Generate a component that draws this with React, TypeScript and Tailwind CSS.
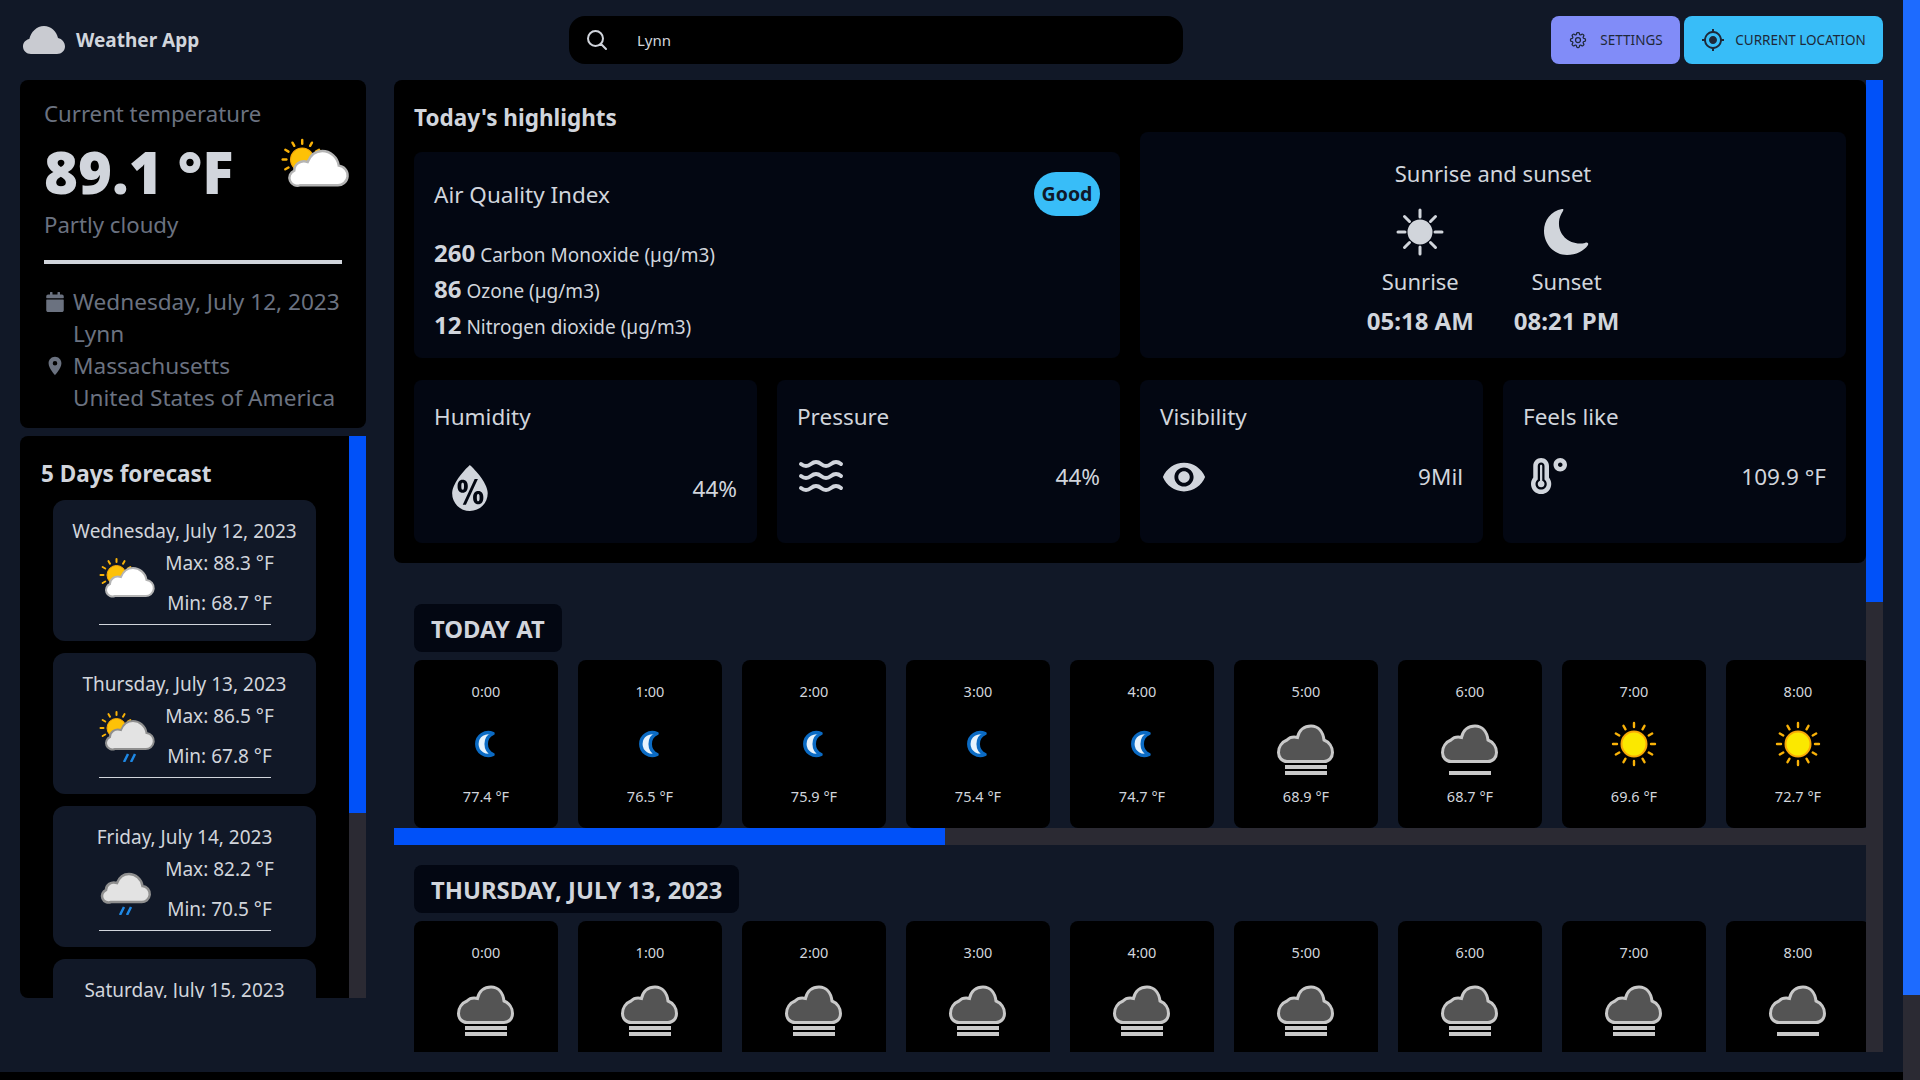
import React from "react";
import { FaCalendar, FaTemperatureHigh } from "react-icons/fa";
import { HiOutlineCog8Tooth, HiOutlineMagnifyingGlass } from "react-icons/hi2";
import { MdGpsFixed, MdLocationOn, MdVisibility } from "react-icons/md";
import { WiHumidity } from "react-icons/wi";
import { LuWaves } from "react-icons/lu";

const SunRays = ({ cx, cy, r1, r2, w }: { cx: number; cy: number; r1: number; r2: number; w: number }) => (
  <g stroke="#f9b208" strokeWidth={w} strokeLinecap="round">
    {[0, 30, 60, 90, 120, 150, 180, 210, 240, 270, 300, 330].map((a) => (
      <line
        key={a}
        x1={cx + r1 * Math.cos((a * Math.PI) / 180)}
        y1={cy + r1 * Math.sin((a * Math.PI) / 180)}
        x2={cx + r2 * Math.cos((a * Math.PI) / 180)}
        y2={cy + r2 * Math.sin((a * Math.PI) / 180)}
      />
    ))}
  </g>
);

const cloudPath = "M20 51h30a8 8 0 0 0 1.500-16C50.500 28 44.500 23 38 23 32 23 28 27 26 32 20 30 15 34 15 39A6.500 6.500 0 0 0 20 51z";

const PartlyCloudy = ({ className, rain, grey }: { className: string; rain?: boolean; grey?: boolean }) => (
  <svg viewBox="0 0 64 64" className={className}>
    <SunRays cx={21.5} cy={30} r1={13} r2={16} w={2} />
    <circle cx="21.500" cy="30" r="9.500" fill="#fdc107" stroke="#f9a806" />
    <path d={cloudPath} fill={grey ? "#e3e3e3" : "#ffffff"} stroke={grey ? "#8f8f8f" : "#b4b4b4"} strokeWidth="2" />
    {rain && <path d="M29 64l4-8M36 64l4-8" stroke="#1e88e5" strokeWidth="2.500" />}
  </svg>
);

const RainCloud = ({ className }: { className: string }) => (
  <svg viewBox="0 0 64 64" className={className}>
    <g transform="translate(-4 0)">
      <path d={cloudPath} fill="#e3e3e3" stroke="#8f8f8f" strokeWidth="2.500" />
    </g>
    <path d="M25 64l4-8M32 64l4-8" stroke="#1e88e5" strokeWidth="2.500" />
  </svg>
);

const Moon = () => (
  <svg viewBox="0 0 64 64" className="h-16 w-16">
    <path d="M39 21.500A11.500 11.500 0 1 0 39 42.500 11.500 11.500 0 0 1 39 21.500z" fill="#e6f3fd" stroke="#0b6bc4" strokeWidth="3.500" strokeLinejoin="round" />
  </svg>
);

const Sun = () => (
  <svg viewBox="0 0 64 64" className="h-16 w-16">
    <SunRays cx={32} cy={32} r1={17} r2={21} w={2.4} />
    <ellipse cx="32" cy="32" rx="12.500" ry="12.500" fill="#fbe800" stroke="#f9a806" strokeWidth="2" />
  </svg>
);

const FogCloud = ({ bars }: { bars: number }) => (
  <svg viewBox="0 0 64 64" className="h-16 w-16">
    <path
      d="M13 49.500C8 49.500 4.500 45.500 4.500 40.500 4.500 35 8 30 13 28 15.500 25.500 19 24.500 23.500 25.500 25 18 30.500 14 37 14 44.500 14 49 20 50 28 55 30 58.500 35 58.500 40.500 58.500 45.500 55 49.500 50 49.500z"
      fill="#545454"
      stroke="#c9c9c9"
      strokeWidth="3"
    />
    {bars > 1 && <rect x="11" y="53" width="42" height="4" fill="#c9c9c9" />}
    <rect x="11" y="59" width="42" height="4" fill="#c9c9c9" />
  </svg>
);

const SolidSun = () => (
  <svg viewBox="0 0 48 48" className="h-12 w-12" fill="#d1d5db" stroke="#d1d5db" strokeWidth="3" strokeLinecap="round">
    <circle cx="24" cy="24" r="11" />
    <path d="M24 2v7M24 39v7M2 24h7M39 24h7M8.500 8.500l5 5M34.500 34.500l5 5M8.500 39.500l5-5M34.500 13.500l5-5" fill="none" />
  </svg>
);

const SolidMoon = () => (
  <svg viewBox="0 0 48 48" className="h-12 w-12" fill="#d1d5db">
    <path d="M19 1C8 3 1 12 1 23 1 36 11 47 24 47 33 47 41 43 45 37 46 35 44 34 42 35 28 38 15 28 16 14 16 10 18 6 20 3 21 1 20 1 19 1z" />
  </svg>
);

type Hour = { time: string; temp?: string; icon: React.ReactNode };

const todayHours: Hour[] = [
  { time: "0:00", temp: "77.4 °F", icon: <Moon /> },
  { time: "1:00", temp: "76.5 °F", icon: <Moon /> },
  { time: "2:00", temp: "75.9 °F", icon: <Moon /> },
  { time: "3:00", temp: "75.4 °F", icon: <Moon /> },
  { time: "4:00", temp: "74.7 °F", icon: <Moon /> },
  { time: "5:00", temp: "68.9 °F", icon: <FogCloud bars={2} /> },
  { time: "6:00", temp: "68.7 °F", icon: <FogCloud bars={1} /> },
  { time: "7:00", temp: "69.6 °F", icon: <Sun /> },
  { time: "8:00", temp: "72.7 °F", icon: <Sun /> },
];

const tomorrowHours: Hour[] = ["0:00", "1:00", "2:00", "3:00", "4:00", "5:00", "6:00", "7:00", "8:00"].map((time) => ({
  time,
  icon: <FogCloud bars={time === "8:00" ? 1 : 2} />,
}));

const forecast = [
  { date: "Wednesday, July 12, 2023", max: "88.3", min: "68.7", icon: <PartlyCloudy className="h-16 w-16 shrink-0" /> },
  { date: "Thursday, July 13, 2023", max: "86.5", min: "67.8", icon: <PartlyCloudy className="h-16 w-16 shrink-0" rain grey /> },
  { date: "Friday, July 14, 2023", max: "82.2", min: "70.5", icon: <RainCloud className="h-16 w-16 shrink-0" /> },
];

const HourRow = ({ hours }: { hours: Hour[] }) => (
  <div className="flex gap-5 pl-5">
    {hours.map((h) => (
      <div key={h.time} className="flex h-[168px] w-[144px] shrink-0 flex-col items-center rounded-lg bg-black pt-[21px] text-[14.5px] text-gray-300">
        <span className="leading-5">{h.time}</span>
        <div className="mt-[11px] flex h-16 items-center justify-center">{h.icon}</div>
        <span className="mt-[10px] leading-5">{h.temp}</span>
      </div>
    ))}
  </div>
);

const Stat = ({ title, value, icon, valueClass }: { title: string; value: string; icon: React.ReactNode; valueClass: string }) => (
  <div className="h-[163px] rounded-lg bg-gray-950 px-5 pt-[21px] text-gray-300">
    <p className="text-[22.5px] leading-8">{title}</p>
    <div className="flex justify-between">
      {icon}
      <span className={`text-[22.5px] leading-8 ${valueClass}`}>{value}</span>
    </div>
  </div>
);

export default function App() {
  return (
    <div className="flex h-[1080px] overflow-hidden bg-black font-['Noto_Sans',sans-serif]">
      <div className="h-[1072px] w-[1903px] shrink-0 bg-[#111827] px-5">
        <header className="flex h-20 items-center justify-between">
          <div className="flex w-[549px] items-center gap-[11px] pl-[3px] text-gray-300">
            <svg viewBox="0 0 42 28" className="h-7 w-[42px]" fill="#c9cbd1">
              <path d="M8 28C3.500 28 0 24.700 0 20.500 0 16.800 2.700 13.700 6.300 13.100 8 6 13.500 0 21 0c7 0 12.500 5 14 12 4 .8 7 4.300 7 8.500 0 4.200-3.500 7.500-8 7.500z" />
            </svg>
            <span className="text-[19px] font-bold">Weather App</span>
          </div>
          <div className="flex h-12 w-[614px] items-center gap-7 rounded-2xl bg-black px-4 text-gray-300">
            <HiOutlineMagnifyingGlass className="h-6 w-6" strokeWidth={2} />
            <span className="text-[15px]">Lynn</span>
          </div>
          <div className="ml-auto flex gap-1 text-[13.5px] text-gray-800">
            <button className="flex h-12 w-[129px] items-center justify-center gap-3 rounded-lg bg-[#818cf8] uppercase">
              <HiOutlineCog8Tooth className="h-5 w-5" />
              Settings
            </button>
            <button className="flex h-12 w-[199px] items-center justify-center gap-[10px] rounded-lg bg-[#38bdf8] uppercase">
              <MdGpsFixed className="h-6 w-6" />
              Current location
            </button>
          </div>
        </header>

        <div className="flex gap-7">
          <aside className="w-[346px] shrink-0">
            <div className="h-[348px] rounded-lg bg-black px-6 pt-[18px] text-[#6b7280]">
              <p className="text-[22.2px] leading-8">Current temperature</p>
              <div className="mt-2 flex items-center justify-between">
                <span className="text-[58px] font-black leading-[68px] text-gray-300">89.1 °F</span>
                <PartlyCloudy className="-mr-3 -mt-5 h-[78px] w-[78px]" />
              </div>
              <p className="mt-[3px] text-[22.2px] leading-8">Partly cloudy</p>
              <div className="mt-[19px] h-1 w-[298px] bg-gray-300" />
              <div className="mt-[22px] whitespace-nowrap text-[22.6px] leading-8">
                <div className="flex items-center gap-[7px]"><FaCalendar className="h-5 w-[22px]" /> Wednesday, July 12, 2023</div>
                <p className="pl-[29px]">Lynn</p>
                <div className="flex items-center gap-[7px]"><MdLocationOn className="h-[22px] w-[22px]" /> Massachusetts</div>
                <p className="pl-[29px]">United States of America</p>
              </div>
            </div>
            <div className="mt-2 flex h-[562px] overflow-hidden rounded-l-lg bg-black">
              <div className="w-[329px] overflow-hidden">
                <p className="pl-[21px] pt-[22px] text-[22.500px] font-bold leading-8 text-gray-300">5 Days forecast</p>
                <div className="mt-[10px] flex flex-col gap-3 pl-[33px]">
                  {forecast.map((d) => (
                    <div key={d.date} className="h-[141px] w-[263px] rounded-xl bg-[#111827] pt-[17px] text-center text-[19px] text-gray-300">
                      <p className="leading-7">{d.date}</p>
                      <div className="flex justify-center gap-[6px]">
                        {d.icon}
                        <div className="leading-9">
                          <p>Max: {d.max} °F</p>
                          <p className="mt-1">Min: {d.min} °F</p>
                        </div>
                      </div>
                      <div className="mx-auto mt-[3px] h-px w-[172px] bg-gray-300" />
                    </div>
                  ))}
                  <div className="h-[141px] w-[263px] rounded-xl bg-[#111827] pt-[17px] text-center text-[19px] leading-7 text-gray-300">Saturday, July 15, 2023</div>
                </div>
              </div>
              <div className="h-full w-[17px] shrink-0 bg-[#2b2a33]">
                <div className="h-[377px] bg-[#0051f9]" />
              </div>
            </div>
          </aside>

          <main className="flex h-[972px] w-[1489px] shrink-0 overflow-hidden">
            <div className="w-[1472px] shrink-0 overflow-hidden">
              <section className="h-[483px] rounded-lg bg-black px-5 pt-[22px] text-gray-300">
                <div className="flex gap-5">
                  <div className="flex-1">
                    <h2 className="text-[22.500px] font-bold leading-8">Today's highlights</h2>
                    <div className="mt-[18px] h-[206px] rounded-lg bg-gray-950 px-5 pt-5">
                      <div className="flex items-center justify-between">
                        <span className="mt-0.5 text-[22.5px]">Air Quality Index</span>
                        <span className="flex h-11 w-[66px] items-center justify-center rounded-[22px] bg-[#38bdf8] text-[19.5px] font-bold text-gray-900">Good</span>
                      </div>
                      <div className="mt-[21px] text-[19px] leading-9">
                        <p><b className="text-2xl">260</b> Carbon Monoxide (µg/m3)</p>
                        <p><b className="text-2xl">86</b> Ozone (µg/m3)</p>
                        <p><b className="text-2xl">12</b> Nitrogen dioxide (µg/m3)</p>
                      </div>
                    </div>
                  </div>
                  <div className="mt-[30px] flex h-[226px] flex-1 flex-col items-center rounded-lg bg-gray-950 pt-[25px]">
                    <p className="text-[22px] leading-8">Sunrise and sunset</p>
                    <div className="mt-[19px] flex gap-10">
                      <div className="flex flex-col items-center">
                        <SolidSun />
                        <p className="mt-[9px] text-[22px] leading-8">Sunrise</p>
                        <p className="mt-2 text-2xl font-bold leading-8">05:18 AM</p>
                      </div>
                      <div className="flex flex-col items-center">
                        <SolidMoon />
                        <p className="mt-[9px] text-[22px] leading-8">Sunset</p>
                        <p className="mt-2 text-2xl font-bold leading-8">08:21 PM</p>
                      </div>
                    </div>
                  </div>
                </div>
                <div className="mt-[22px] grid grid-cols-4 gap-5">
                  <Stat title="Humidity" value="44%" valueClass="mt-10" icon={<WiHumidity className="mt-[19px] h-[72px] w-[72px] shrink-0" />} />
                  <Stat title="Pressure" value="44%" valueClass="mt-7" icon={<LuWaves className="mt-[19px] h-12 w-12" />} />
                  <Stat title="Visibility" value="9Mil" valueClass="mt-7" icon={<MdVisibility className="ml-px mt-[21px] h-[46px] w-[46px]" />} />
                  <Stat title="Feels like" value="109.9 °F" valueClass="mt-7" icon={<FaTemperatureHigh className="ml-2 mt-[25px] h-9 w-9" />} />
                </div>
              </section>

              <div className="mt-[41px] pl-5"><span className="inline-block h-12 rounded-lg bg-gray-950 px-[17px] text-[23.800px] font-bold uppercase leading-[50px] text-gray-300">Today at</span></div>
              <div className="mt-2 overflow-hidden"><HourRow hours={todayHours} /></div>
              <div className="h-[17px] bg-[#2b2a33]"><div className="h-full w-[551px] bg-[#0051f9]" /></div>
              <div className="mt-5 pl-5"><span className="inline-block h-12 rounded-lg bg-gray-950 px-[17px] text-[23.800px] font-bold uppercase leading-[50px] text-gray-300">Thursday, July 13, 2023</span></div>
              <div className="mt-2 overflow-hidden"><HourRow hours={tomorrowHours} /></div>
            </div>
            <div className="h-full w-[17px] shrink-0 bg-[#2b2a33]">
              <div className="h-[522px] bg-[#0051f9]" />
            </div>
          </main>
        </div>
      </div>
      <div className="h-full w-[17px] shrink-0 bg-[#2b2a33]">
        <div className="h-[995px] bg-[#1d6bff]" />
      </div>
    </div>
  );
}
